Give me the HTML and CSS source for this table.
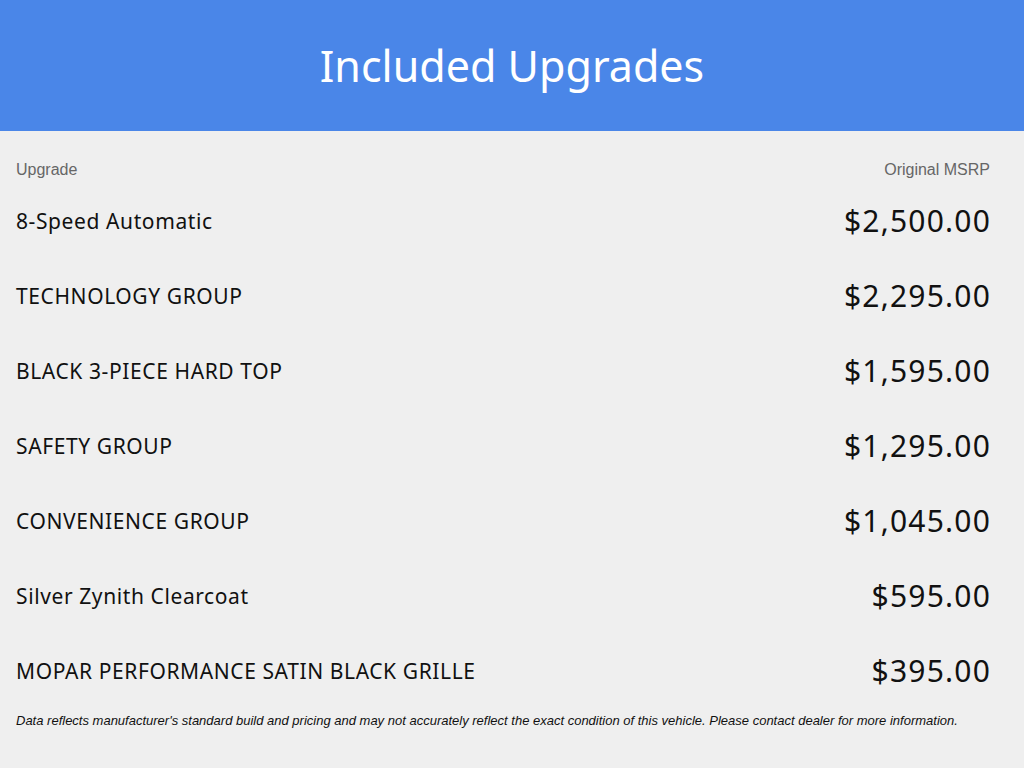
FILE: index.html
```html
<!DOCTYPE html>
<html>
<head>
<meta charset="utf-8">
<link rel="stylesheet" href="styles.css">
</head>
<body>
<header class="banner"><h1 class="title">Included Upgrades</h1></header>
<main class="content">
  <div class="labels"><span>Upgrade</span><span>Original MSRP</span></div>
  <ul class="list">
    <li class="row"><span class="name">8-Speed Automatic</span><span class="price">$2,500.00</span></li>
    <li class="row"><span class="name">TECHNOLOGY GROUP</span><span class="price">$2,295.00</span></li>
    <li class="row"><span class="name">BLACK 3-PIECE HARD TOP</span><span class="price">$1,595.00</span></li>
    <li class="row"><span class="name">SAFETY GROUP</span><span class="price">$1,295.00</span></li>
    <li class="row"><span class="name">CONVENIENCE GROUP</span><span class="price">$1,045.00</span></li>
    <li class="row"><span class="name">Silver Zynith Clearcoat</span><span class="price">$595.00</span></li>
    <li class="row"><span class="name">MOPAR PERFORMANCE SATIN BLACK GRILLE</span><span class="price">$395.00</span></li>
  </ul>
  <p class="note">Data reflects manufacturer's standard build and pricing and may not accurately reflect the exact condition of this vehicle. Please contact dealer for more information.</p>
</main>
</body>
</html>
```
FILE: styles.css
```css
html, body {
  margin: 0;
  padding: 0;
  background: #efefef;
  height: 100%;
}
body {
  font-family: "Noto Sans", sans-serif;
  color: #111;
}
.banner {
  height: 131px;
  background: #4a86e8;
  display: flex;
  align-items: center;
  justify-content: center;
}
.title {
  margin: 0;
  color: #fff;
  font-weight: 400;
  font-size: 43px;
  line-height: 1;
}
.content {
  padding: 30px 34px 0 16px;
}
.labels {
  display: flex;
  justify-content: space-between;
  font-family: "Liberation Sans", Arial, sans-serif;
  font-size: 16px;
  line-height: 17px;
  color: #666;
  margin-bottom: 5px;
}
.list {
  list-style: none;
  margin: 0;
  padding: 0;
}
.row {
  height: 75px;
  display: flex;
  align-items: center;
  justify-content: space-between;
}
.name {
  font-size: 21px;
  letter-spacing: 0.6px;
}
.price {
  font-size: 30px;
  letter-spacing: 1.2px;
  margin-right: -1px;
}
.note {
  margin: 5px 0 0;
  font-family: "Liberation Sans", Arial, sans-serif;
  font-style: italic;
  font-size: 13px;
  line-height: 15px;
  color: #111;
}
```
